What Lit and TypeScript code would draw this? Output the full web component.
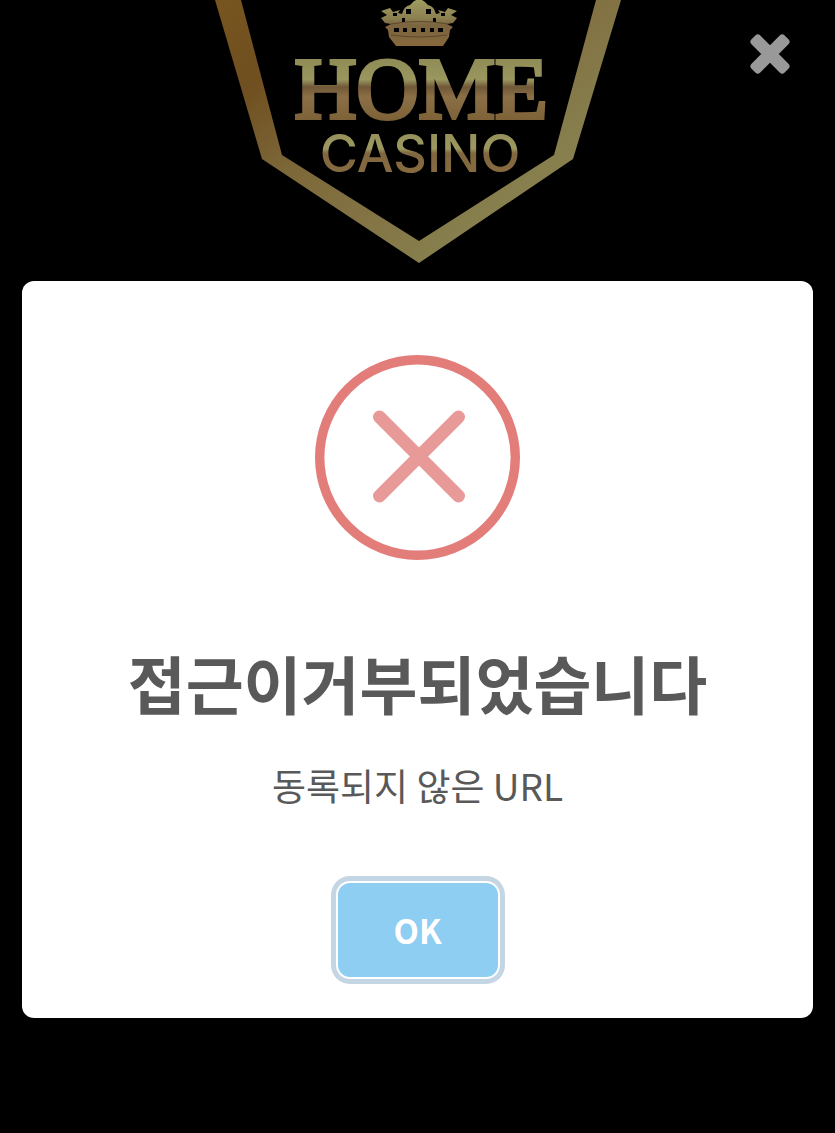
import { LitElement, html, css } from "lit";
import { customElement, property, state } from "lit/decorators.js";

@customElement("casino-logo")
export class CasinoLogo extends LitElement {
  static styles = css`
    :host {
      display: block;
    }
    .logo {
      display: block;
    }
    .home {
      font: 400 86px "Liberation Serif", serif;
      fill: url(#home);
      stroke: url(#home);
      stroke-width: 4px;
    }
    .casino {
      font: 500 52px Inter, sans-serif;
      fill: url(#casino);
    }
  `;

  render() {
    return html`
      <svg class="logo" width="411" height="263" viewBox="212 0 411 263" role="img" aria-label="HOME CASINO">
        <defs>
          <linearGradient id="frame" gradientUnits="userSpaceOnUse" x1="220" y1="0" x2="440" y2="263">
            <stop offset="0" stop-color="#76551f" />
            <stop offset="0.25" stop-color="#704f20" />
            <stop offset="0.5" stop-color="#7c6738" />
            <stop offset="0.75" stop-color="#837344" />
            <stop offset="1" stop-color="#87804e" />
          </linearGradient>
          <linearGradient id="home" gradientUnits="userSpaceOnUse" x1="0" y1="56" x2="0" y2="122">
            <stop offset="0" stop-color="#8f8a55" />
            <stop offset="0.36" stop-color="#99965e" />
            <stop offset="0.47" stop-color="#705838" />
            <stop offset="0.62" stop-color="#8b6f46" />
            <stop offset="1" stop-color="#7c6036" />
          </linearGradient>
          <linearGradient id="casino" gradientUnits="userSpaceOnUse" x1="0" y1="133" x2="0" y2="172">
            <stop offset="0" stop-color="#96915a" />
            <stop offset="0.4" stop-color="#9b9860" />
            <stop offset="0.52" stop-color="#80673f" />
            <stop offset="1" stop-color="#876a40" />
          </linearGradient>
          <linearGradient id="crown" gradientUnits="userSpaceOnUse" x1="0" y1="0" x2="0" y2="46">
            <stop offset="0" stop-color="#a09d60" />
            <stop offset="0.4" stop-color="#8b7f50" />
            <stop offset="0.55" stop-color="#7c6440" />
            <stop offset="1" stop-color="#86683b" />
          </linearGradient>
        </defs>
        <path
          fill="url(#frame)"
          d="M215 0 262 159 419 263 573 159 621 0H596L554 155 419 241 282 155 241 0Z"
        />
        <path
          fill="url(#crown)"
          d="M413 2Q419-3 425 2L428 5Q434 6 436 14L440 13 438 10 445 12 448 8 457 11 451 15 457 18 453 23 447 24 453 27 450 30 449 37 443 46H396L389 37 388 30 385 27 391 24 385 23 381 18 387 15 381 11 390 8 393 12 400 10 398 13 402 14Q404 6 410 5Z"
        />
        <path
          fill="#000"
          d="M406 9h5v5h-5zM426 9h5v5h-5zM393 13h4v3h-4zM441 13h4v3h-4zM402 18h3v4h-3zM433 18h3v4h-3zM394 28h5v4h-5zM403 28h4v4h-4zM412 28h4v4h-4zM421 28h4v4h-4zM430 28h4v4h-4zM438 28h5v4h-5z"
        />
        <path fill="none" stroke="#5d492b" d="M391 24Q419 19 448 24M391 35Q419 39 447 35" />
        <text class="home" x="421" y="118" text-anchor="middle">HOME</text>
        <text class="casino" x="420" y="172" text-anchor="middle">CASINO</text>
      </svg>
    `;
  }
}

@customElement("alert-dialog")
export class AlertDialog extends LitElement {
  @property() heading = "";
  @property() message = "";

  static styles = css`
    :host {
      display: block;
      margin: 18px 22px 0;
    }
    .dialog {
      display: flex;
      flex-direction: column;
      align-items: center;
      padding: 74px 24px 41px;
      border-radius: 12px;
      background: #fff;
      color: #595959;
      text-align: center;
    }
    .icon {
      display: block;
    }
    .heading {
      margin: 84px 0 0;
      font-size: 63px;
      line-height: 76px;
      font-weight: 700;
    }
    .message {
      margin: 42px 0 0;
      font-size: 37px;
      line-height: 46px;
    }
    .ok {
      width: 160px;
      height: 94px;
      margin-top: 75px;
      padding: 0;
      border: 0;
      border-radius: 12px;
      outline: none;
      background: #8fcef3;
      box-shadow: 0 0 0 2px #fff, 0 0 0 7px #c4d5e4;
      color: #fff;
      font: inherit;
      font-size: 33px;
      font-weight: 700;
      cursor: pointer;
    }
  `;

  private confirm() {
    this.dispatchEvent(new CustomEvent("dismiss"));
  }

  render() {
    return html`
      <section class="dialog" role="alertdialog" aria-labelledby="heading" aria-describedby="message">
        <svg class="icon" width="205" height="205" viewBox="0 0 205 205" aria-hidden="true">
          <circle cx="102.5" cy="102.5" r="97.8" fill="none" stroke="#e37d7a" stroke-width="9.4" />
          <path
            d="M64.5 62 143.5 141M143.5 62 64.5 141"
            fill="none"
            stroke="#e89a98"
            stroke-width="13"
            stroke-linecap="round"
          />
        </svg>
        <h1 class="heading" id="heading">${this.heading}</h1>
        <p class="message" id="message">${this.message}</p>
        <button class="ok" type="button" @click=${this.confirm}>OK</button>
      </section>
    `;
  }
}

@customElement("app-root")
export class AppRoot extends LitElement {
  @state() private open = true;

  static styles = css`
    :host {
      display: block;
      min-height: 100vh;
      background: #000;
      font-family: "Noto Sans CJK KR", sans-serif;
    }
    .header {
      position: relative;
      display: flex;
      justify-content: center;
    }
    .close {
      position: absolute;
      top: 30px;
      right: 41px;
      width: 48px;
      height: 48px;
      padding: 0;
      border: 0;
      background: none;
      color: #999;
      cursor: pointer;
    }
    .cross {
      display: block;
    }
  `;

  private dismiss() {
    this.open = false;
  }

  render() {
    return html`
      <header class="header">
        <casino-logo></casino-logo>
        <button class="close" type="button" aria-label="Close" @click=${this.dismiss}>
          <svg class="cross" width="48" height="48" viewBox="0 0 48 48" aria-hidden="true">
            <path
              d="M8 11.8 11.8 8 24 20.2 36.2 8 40 11.8 27.8 24 40 36.2 36.2 40 24 27.8 11.8 40 8 36.2 20.2 24Z"
              fill="currentColor"
              stroke="currentColor"
              stroke-width="7"
              stroke-linejoin="round"
            />
          </svg>
        </button>
      </header>
      ${this.open
        ? html`<alert-dialog
            heading="접근이거부되었습니다"
            message="동록되지 않은 URL"
            @dismiss=${this.dismiss}
          ></alert-dialog>`
        : null}
    `;
  }
}
